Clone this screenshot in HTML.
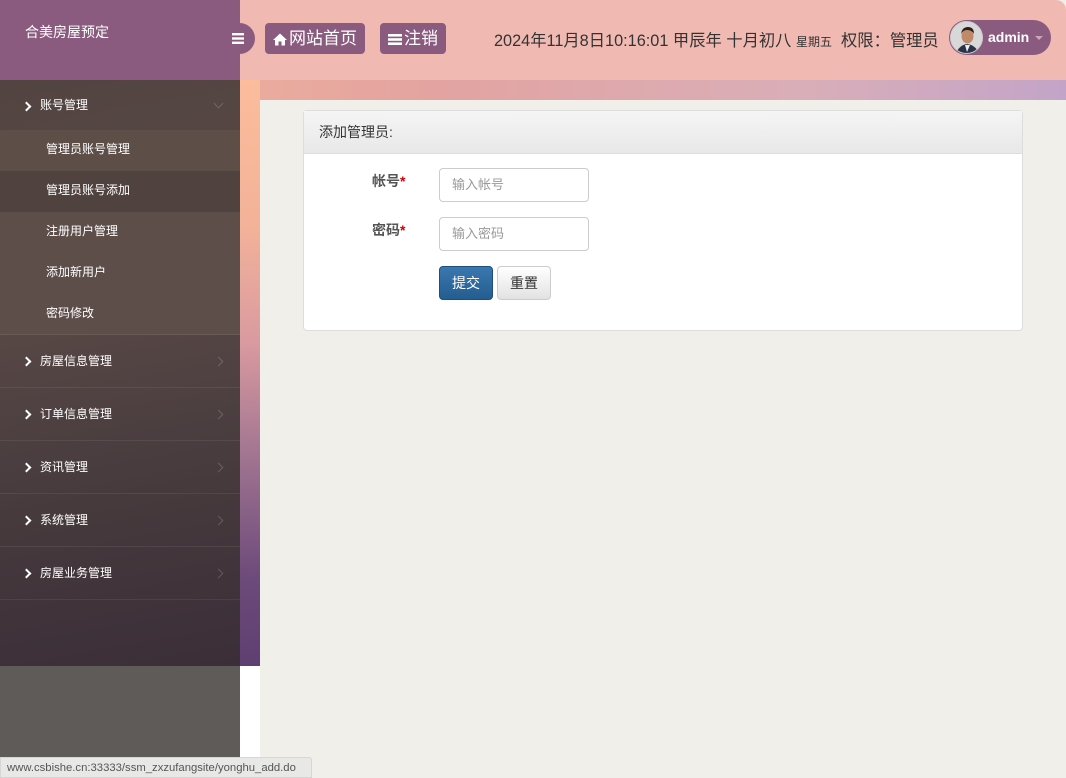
<!DOCTYPE html>
<html><head><meta charset="utf-8"><style>
*{margin:0;padding:0;box-sizing:border-box}
body{width:1066px;height:778px;overflow:hidden;font-family:"Liberation Sans","Noto Sans CJK SC",sans-serif;background:#f0efe9;position:relative}
.bggrad{position:absolute;left:0;top:80px;width:1066px;height:20px;background:linear-gradient(90deg,#f6b89a 0%,#e3a3a0 40%,#d9aeb8 75%,#c3a4c8 100%)}
.lstrip{position:absolute;left:240px;top:80px;width:20px;height:586px;background:linear-gradient(180deg,#fbbd9c 0%,#f3b299 25%,#d99aa0 45%,#9f7390 65%,#6c4a7a 85%,#5f3f72 100%)}
.wstrip{position:absolute;left:240px;top:666px;width:20px;height:112px;background:#fff}
.top{position:absolute;left:0;top:0;width:1066px;height:80px;background:#f0bab2;border-top-right-radius:10px}
.logo{position:absolute;left:0;top:0;width:240px;height:80px;background:#8a5b7e;color:#fff;font-size:14px;padding:22px 0 0 25px}
.tog{position:absolute;left:222px;top:23px;width:33px;height:31px;background:#8a5b7e;border-radius:0 16px 16px 0}
.btn{position:absolute;top:23px;height:31px;background:#8a5b7e;color:#fff;border-radius:4px;font-size:17px;line-height:31px;padding:0 8px}
.btn svg{vertical-align:-2px;margin-right:2px}
.info{position:absolute;left:494px;top:27px;font-size:16.3px;color:#333;white-space:nowrap}
.user{position:absolute;left:949px;top:20px;width:102px;height:35px;background:#8a5b7e;border-radius:18px;color:#fff;font-weight:bold;font-size:14px}
.av{position:absolute;left:1px;top:1px;width:33px;height:33px;border-radius:50%;background:#dcdcdc;overflow:hidden;border:1px solid #ccc}
.side{position:absolute;left:0;top:80px;width:240px;height:586px;background:linear-gradient(170deg,#524441 0%,#5a4a47 35%,#463a3d 70%,#3b2e38 100%)}
.sfoot{position:absolute;left:0;top:666px;width:240px;height:112px;background:#5f5b59}
.m{height:53px;border-bottom:1px solid rgba(255,255,255,.07);color:#fff;font-size:12px;line-height:53px;padding-left:40px;position:relative}
.m:before{content:"";position:absolute;left:23px;top:23px;width:5px;height:5px;border-top:2px solid #fff;border-right:2px solid #fff;transform:rotate(45deg)}
.m:after{content:"";position:absolute;right:18px;top:23px;width:6px;height:6px;border-top:1px solid rgba(255,255,255,.18);border-right:1px solid rgba(255,255,255,.18);transform:rotate(45deg)}
.m.o{height:50px;line-height:50px;border:0}
.m.o:after{transform:rotate(135deg);top:20px}
.s{height:41px;line-height:39px;color:#fff;font-size:12px;padding-left:46px;background:#5d4e4a}
.panel{position:absolute;left:303px;top:110px;width:720px;height:221px;background:#fff;border:1px solid #ddd;border-radius:4px}
.ph{height:43px;background:linear-gradient(#f5f5f5,#e8e8e8);border-bottom:1px solid #ddd;font-size:14px;color:#333;line-height:42px;padding-left:15px}
.lab{position:absolute;left:68px;font-size:14px;font-weight:bold;color:#555}
.lab b{color:#c00}
.in{position:absolute;left:135px;width:150px;height:34px;border:1px solid #ccc;border-radius:4px;font-size:13px;color:#999;line-height:32px;padding-left:12px}
.url{position:absolute;left:0;top:757px;width:312px;height:21px;background:#e8e8e6;color:#555;font-size:11.3px;line-height:21px;padding:0 6px;border-top-right-radius:3px;border:1px solid #d6d6d6;white-space:nowrap;overflow:hidden}
</style></head><body>
<div class="bggrad"></div><div class="lstrip"></div><div class="wstrip"></div>
<div class="top">
<div class="logo">合美房屋预定</div>
<div class="tog"><svg width="33" height="31" viewBox="0 0 33 31"><rect x="10" y="10" width="12" height="2.4" fill="#fff"/><rect x="10" y="14.3" width="12" height="2.4" fill="#fff"/><rect x="10" y="18.6" width="12" height="2.4" fill="#fff"/></svg></div>
<div class="btn" style="left:265px"><svg width="14" height="13" viewBox="0 0 14 13"><path d="M7 0.5 L0 7 L2 7 L2 12.5 L5.5 12.5 L5.5 8.5 L8.5 8.5 L8.5 12.5 L12 12.5 L12 7 L14 7Z" fill="#fff"/></svg>网站首页</div>
<div class="btn" style="left:380px"><svg width="14" height="13" viewBox="0 0 14 13"><rect y="1" width="14" height="2.6" fill="#fff"/><rect y="5.2" width="14" height="2.6" fill="#fff"/><rect y="9.4" width="14" height="2.6" fill="#fff"/></svg>注销</div>
<div class="info">2024年11月8日10:16:01 甲辰年 十月初八 <span style="font-size:12px">星期五</span>&nbsp; 权限：管理员</div>
<div class="user"><div class="av"><svg width="33" height="33" viewBox="0 0 33 33"><rect width="33" height="33" fill="#d8d8d8"/><path d="M4 33 Q8 23 16 22 Q25 23 29 33Z" fill="#2b3348"/><path d="M14 23 L16 30 L19 23Z" fill="#eee"/><ellipse cx="16.5" cy="14" rx="6" ry="7.5" fill="#c08a6a"/><path d="M10 12 Q11 5 17 5 Q23 5 23 12 Q21 8 16 8 Q12 8 10 12Z" fill="#2a1f1a"/></svg></div><span style="position:absolute;left:39px;top:9px">admin</span><span style="position:absolute;left:86px;top:16px;border:4px solid transparent;border-top-color:#c9a6bd;"></span></div>
</div>
<div class="side">
<div class="m o">账号管理</div>
<div class="s" style="background:#5d4e47">管理员账号管理</div>
<div class="s" style="background:#4f423f">管理员账号添加</div>
<div class="s">注册用户管理</div>
<div class="s">添加新用户</div>
<div class="s" style="border-bottom:1px solid rgba(255,255,255,.08)">密码修改</div>
<div class="m">房屋信息管理</div>
<div class="m">订单信息管理</div>
<div class="m">资讯管理</div>
<div class="m">系统管理</div>
<div class="m">房屋业务管理</div>
</div>
<div class="sfoot"></div>
<div class="panel">
<div class="ph">添加管理员:</div>
<div class="lab" style="top:60px">帐号<b>*</b></div>
<div class="in" style="top:57px">输入帐号</div>
<div class="lab" style="top:109px">密码<b>*</b></div>
<div class="in" style="top:106px">输入密码</div>
<div style="position:absolute;left:135px;top:155px;width:54px;height:34px;background:linear-gradient(#3a78b0,#245d8f);border:1px solid #1f4f7c;border-radius:4px;color:#fff;font-size:14px;line-height:32px;text-align:center">提交</div>
<div style="position:absolute;left:193px;top:155px;width:54px;height:34px;background:linear-gradient(#fff,#e2e2e2);border:1px solid #ccc;border-radius:4px;color:#333;font-size:14px;line-height:32px;text-align:center">重置</div>
</div>
<div class="url">www.csbishe.cn:33333/ssm_zxzufangsite/yonghu_add.do</div>
</body></html>
